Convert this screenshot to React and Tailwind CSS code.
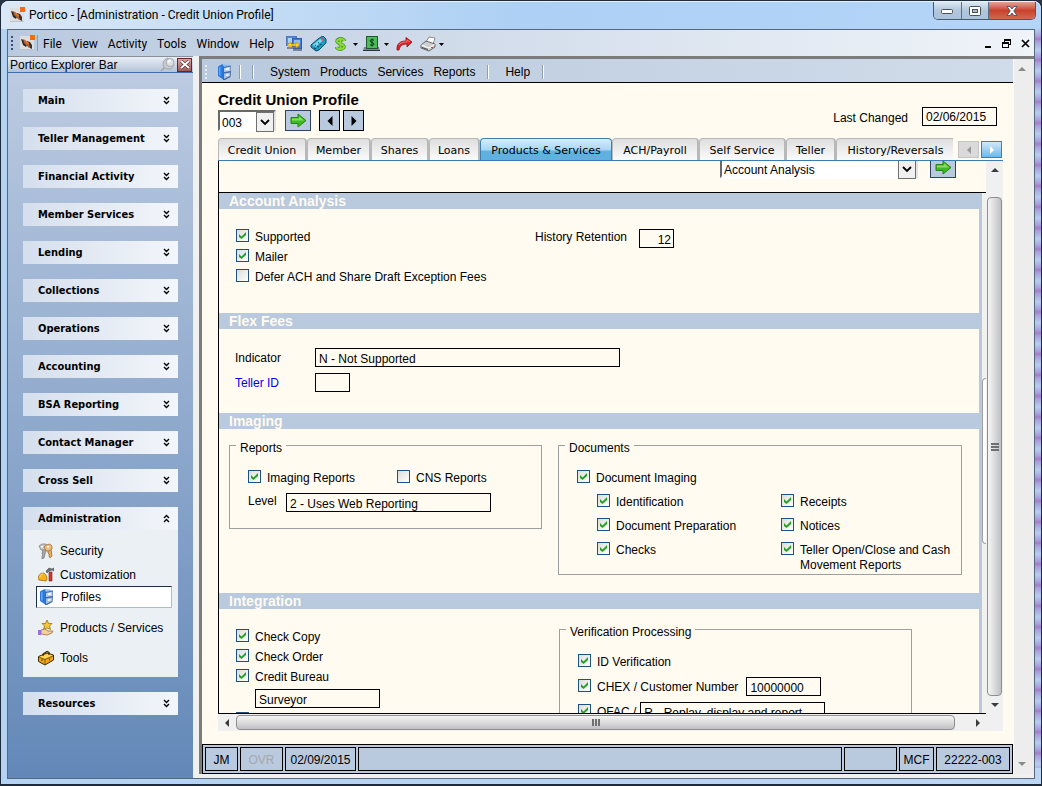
import React from "react";

const UI = "font-['Liberation_Sans',Arial,sans-serif]";

/* ---------- icons ---------- */

function Logo() {
  return (
    <svg width="17" height="16" viewBox="0 0 17 16" className="shrink-0" aria-hidden="true">
      <rect x="1" y="1" width="14" height="14" fill="#dcdee2" />
      <path d="M1 14h14v1H1z" fill="#c0c4ca" />
      <path d="M2 4l3 1 1 2 2 3-1 2-3-2z" fill="#2b2726" />
      <path d="M8 6l3 1 2 3 0 4-2-1-3-3z" fill="#3a3230" />
      <path d="M4 4l4 3 3 5-1 1-5-5z" fill="#a8603a" />
      <path d="M5 4l5 4v2L7 8z" fill="#f0701c" />
      <rect x="11" y="0" width="5" height="5" fill="#fa6a0a" />
    </svg>
  );
}

function Cabinet() {
  return (
    <svg width="16" height="16" viewBox="0 0 16 16" className="shrink-0" aria-hidden="true">
      <path d="M1 2.500L5.500 0 7 2v14l-6-4z" fill="#2a78dc" />
      <path d="M2 3.500l1.500-1v9.500L2 11z" fill="#62aaf6" />
      <path d="M5.500 0L11 0.500 14 2 7 3z" fill="#8fc0f2" />
      <path d="M6 3l8-1.500V7L13.500 13 8 16H6z" fill="#44679f" />
      <path d="M7 4l6.500-1.500v4.500L7 8z" fill="#b7d0f0" />
      <path d="M7 9.500l6-1V12l-6 3z" fill="#a3c1e8" />
      <path d="M9 4.500l3-.5v1.500L9 6zM9 10.500l2.500-.5v1.500l-2.500.5z" fill="#fff" />
    </svg>
  );
}

function Computers() {
  return (
    <svg width="17" height="16" viewBox="0 0 17 16" aria-hidden="true">
      <rect x="0.5" y="0.5" width="10" height="9" fill="#4e8df0" stroke="#5577b8" />
      <rect x="2" y="2" width="7" height="5" fill="#a9d0ff" />
      <rect x="6.5" y="2.500" width="9" height="10" fill="#3f78df" stroke="#3a5da6" />
      <rect x="8" y="4" width="6" height="4" fill="#8cbcfb" />
      <path d="M7 13h9v2H7zM1 11h6v2H1z" fill="#7a86a0" />
      <path d="M1 9l4-3v2h5V6l4 3-4 3v-2H5v2z" fill="#ffd21c" stroke="#b98c14" strokeWidth="0.600" />
    </svg>
  );
}

function Phone() {
  return (
    <svg width="17" height="16" viewBox="0 0 17 16" aria-hidden="true">
      <path d="M1 9L8 3l3-2 2-1 3 3v4l-7 7-3 1-5-4z" fill="#1f9cc4" stroke="#0b4d68" />
      <path d="M2.500 9L10 3l3 1-7 7z" fill="#7edcf0" />
      <path d="M4 12l2 1M7 10l2 1M9.500 8l2 1M5 9l1 .5M8 6.500l1 .5" stroke="#0b4d68" strokeWidth="1.300" />
      <path d="M11 3l2-1 1 2-2 1z" fill="#f04a4a" />
    </svg>
  );
}

function Dollar() {
  return (
    <svg width="13" height="16" viewBox="0 0 13 16" aria-hidden="true">
      <path d="M10.500 5C10 2.500 3 2 3 5.300 3 8 10 7.500 10 10.500 10 14 3 13.500 2.500 11M6.500 1v14" fill="none" stroke="#3f8d1a" strokeWidth="3.400" />
      <path d="M10.500 5C10 2.500 3 2 3 5.300 3 8 10 7.500 10 10.500 10 14 3 13.500 2.500 11M6.500 1.500v13" fill="none" stroke="#8ada3a" strokeWidth="2" />
    </svg>
  );
}

function CashDrawer() {
  return (
    <svg width="18" height="16" viewBox="0 0 18 16" aria-hidden="true">
      <rect x="3.500" y="0.500" width="11" height="12" fill="#4dbb5b" stroke="#1d5a2a" />
      <path d="M1 11h2v2h12v-2h1l1 4H0z" fill="#7c8594" />
      <path d="M0 14h17v1H0z" fill="#2c333e" />
      <path d="M11 4.500C10.500 3.300 7 3.300 7 4.900S11 6.500 11 8.200 7.500 9.500 7 8.500M9 2.500v8" fill="none" stroke="#0d3b16" />
    </svg>
  );
}

function RedArrow() {
  return (
    <svg width="17" height="16" viewBox="0 0 17 16" aria-hidden="true">
      <path d="M1 14c-.5-6 3-9 9-9V1.500L16 6l-5 5V8C6 8 4 10 3 14z" fill="#e1202a" stroke="#8d0f14" strokeWidth="0.800" />
      <path d="M3 9c1-2 4-3 8-3V4l3 2" fill="none" stroke="#f77c7c" strokeWidth="0.900" />
    </svg>
  );
}

function Printer() {
  return (
    <svg width="17" height="16" viewBox="0 0 17 16" aria-hidden="true">
      <path d="M6 6l3-5 6 1-2 6z" fill="#fff" stroke="#777" strokeWidth="0.800" />
      <path d="M1 9l5-4 9 3v3l-6 4-8-3z" fill="#cfcfcf" stroke="#5a5a5a" strokeWidth="0.900" />
      <path d="M1.500 9l7.500 3 5.500-3.500" fill="none" stroke="#fff" />
      <path d="M2 11l6 2v1l-6-2z" fill="#4c4c4c" />
      <path d="M11 11h2v1h-2z" fill="#d23c3c" />
    </svg>
  );
}

function Caret() {
  return (
    <svg width="5" height="3" viewBox="0 0 5 3" className="shrink-0" aria-hidden="true">
      <path d="M0 0h5L2.500 3z" fill="#000" />
    </svg>
  );
}

function Keys() {
  return (
    <svg width="16" height="16" viewBox="0 0 16 16" className="shrink-0" aria-hidden="true">
      <path d="M5 6l3 1-2 8-2 1v-3l1-1-1-1z" fill="#a9a9a9" stroke="#777" strokeWidth="0.700" />
      <path d="M1 3l3-2h4l1 3-2 3H3z" fill="#c4c4c4" stroke="#858585" strokeWidth="0.800" />
      <path d="M10 6h3l1 7-2 2-1-2 0-2-1-1z" fill="#e3ab55" stroke="#96662a" strokeWidth="0.700" />
      <path d="M6 4l2-2 4-1 2 2v3l-3 2H8z" fill="#edbd6f" stroke="#a5733a" strokeWidth="0.800" />
      <path d="M9 3h2v1.500H9zM3 3h2v1.500H3z" fill="#fff" />
    </svg>
  );
}

function HatHammer() {
  return (
    <svg width="16" height="16" viewBox="0 0 16 16" className="shrink-0" aria-hidden="true">
      <path d="M0 11.500C0 8 3 6 5 6s4 3 4 6l-1 2-7-1z" fill="#f7b21b" stroke="#a26708" strokeWidth="0.800" />
      <path d="M2 10c0-2 1-3 3-3" fill="none" stroke="#ffe693" />
      <path d="M8 4l3-3 3 1 2-1v3l-2-1-3 1-2 2z" fill="#6a6f78" stroke="#4c5058" strokeWidth="0.600" />
      <path d="M11 5h3v9h-3z" fill="#d23b2b" stroke="#7c1b12" strokeWidth="0.600" />
    </svg>
  );
}

function HandStar() {
  return (
    <svg width="16" height="16" viewBox="0 0 16 16" className="shrink-0" aria-hidden="true">
      <path d="M9 0l1.500 3.500 3.500 0L11.500 6l1 3.500L9 7.800 5.500 9.500l1-3.500L4 3.500l3.500 0z" fill="#f4c63a" stroke="#9a7413" strokeWidth="0.800" />
      <path d="M3 10l4-1 3 2h5l-1 2-5 2-6-1z" fill="#f6cfa0" stroke="#a8703a" strokeWidth="0.800" />
      <path d="M0 10h3v5H0z" fill="#9a6fe0" />
    </svg>
  );
}

function Toolbox() {
  return (
    <svg width="16" height="16" viewBox="0 0 16 16" className="shrink-0" aria-hidden="true">
      <path d="M.5 6.500L9 3l6.500 2v5L7 15l-6.500-3.500z" fill="#f0a512" stroke="#3f2903" />
      <path d="M1.500 6.500L9.500 4l5 1.300L7 9z" fill="#ffd457" />
      <path d="M1 7l6 2.500L15 6M7 9.500V15" fill="none" stroke="#6b4605" strokeWidth="0.800" />
      <path d="M5 6V4l4-2.500 2 1V5" fill="none" stroke="#3f2a04" strokeWidth="1.300" />
      <path d="M3.500 9h1v2h-1zM11 8.500h1v2h-1z" fill="#5e3d04" />
    </svg>
  );
}

function Pin() {
  return (
    <svg width="16" height="15" viewBox="0 0 16 15" aria-hidden="true">
      <path d="M1 14l5-5" stroke="#a4a4a4" strokeWidth="1.500" />
      <path d="M3 7c0-3 2-5 5-6l6 6c-1 4-3 5-6 5-3 0-5-2-5-5z" fill="#c8cbd0" stroke="#a4a7ab" />
      <circle cx="10" cy="5.500" r="4" fill="#dcdfe3" stroke="#a6a9ad" />
      <path d="M8 5l2.500-2" stroke="#fff" strokeWidth="2" />
    </svg>
  );
}

function GreenArrow() {
  return (
    <svg width="17" height="15" viewBox="0 0 17 15" aria-hidden="true">
      <path d="M1 4.500h7V1l8 6.500-8 6.500v-3.500H1z" fill="#3fba27" stroke="#23840f" />
      <path d="M2 7.500v-2h7V3.200l5 4.300z" fill="#86dc62" />
    </svg>
  );
}

function Chevrons({ up }) {
  return (
    <svg width="7" height="9" viewBox="0 0 7 9" className="mr-2 shrink-0" aria-hidden="true">
      {up ? (
        <path d="M1 4l2.500-2.500L6 4M1 8l2.500-2.500L6 8" fill="none" stroke="#000" strokeWidth="1.400" />
      ) : (
        <path d="M1 1l2.500 2.500L6 1M1 5l2.500 2.500L6 5" fill="none" stroke="#000" strokeWidth="1.400" />
      )}
    </svg>
  );
}

function Triangle({ dir, color = "#3c3c3c", size = 8 }) {
  const paths = {
    up: "M0 6h8L4 2z",
    down: "M0 2h8L4 6z",
    left: "M6 0v8L2 4z",
    right: "M2 0v8l4-4z",
  };
  return (
    <svg width={size} height={size} viewBox="0 0 8 8" aria-hidden="true">
      <path d={paths[dir]} fill={color} />
    </svg>
  );
}

/* ---------- form parts ---------- */

function Check({ label, checked = false, className = "" }) {
  return (
    <label className={`flex items-start gap-1.5 leading-[15px] ${className}`}>
      <span className="grid h-[13px] w-[13px] shrink-0">
        <input
          type="checkbox"
          defaultChecked={checked}
          className="peer col-start-1 row-start-1 h-[13px] w-[13px] appearance-none border border-[#1c5180] bg-linear-to-br from-[#dcdcd7] to-white"
        />
        <svg
          width="13"
          height="13"
          viewBox="0 0 13 13"
          className="pointer-events-none invisible col-start-1 row-start-1 peer-checked:visible"
          aria-hidden="true"
        >
          <path d="M3 5l2.500 2.500L10 3v3L5.500 10 3 8z" fill="#21a121" />
        </svg>
      </span>
      <span className="pt-px">{label}</span>
    </label>
  );
}

function Field({ label, value, className = "" }) {
  return (
    <input
      type="text"
      aria-label={label}
      defaultValue={value}
      className={`h-[19px] border border-black bg-[#fffbf0] px-[3px] pt-[2px] ${className}`}
    />
  );
}

function Picker({ label, value, className = "" }) {
  return (
    <div className={`grid border-2 border-t-[#696969] border-l-[#696969] border-r-[#e3e3e3] border-b-[#e3e3e3] bg-white ${className}`}>
      <select aria-label={label} className="col-start-1 row-start-1 appearance-none bg-white pt-0.5 pl-0.5 outline-none">
        <option>{value}</option>
      </select>
      <span className="pointer-events-none col-start-1 row-start-1 grid w-[18px] place-items-center justify-self-end border border-[#707070] bg-[#f0f0f0]">
        <svg width="10" height="7" viewBox="0 0 10 7" aria-hidden="true">
          <path d="M1 1l4 4 4-4" fill="none" stroke="#000" strokeWidth="1.800" />
        </svg>
      </span>
    </div>
  );
}

function GoButton() {
  return (
    <button type="button" aria-label="Go" className="grid h-[21px] w-[26px] shrink-0 place-items-center border border-[#2b4468] bg-[#b9c9de]">
      <GreenArrow />
    </button>
  );
}

function Section({ title, children }) {
  return (
    <section>
      <h2 className="h-4 bg-[#b9c9de] pl-2.5 text-[14px] leading-4 font-bold text-[#fffbf0]">{title}</h2>
      {children}
    </section>
  );
}

function Group({ title, className = "", children }) {
  return (
    <fieldset className={`shrink-0 border border-[#9d9fa1] ${className}`}>
      <legend className="ml-1.5 px-1 pt-1.5 leading-[14px]">{title}</legend>
      {children}
    </fieldset>
  );
}

/* ---------- sidebar ---------- */

const NAV_TOP = [
  "Main",
  "Teller Management",
  "Financial Activity",
  "Member Services",
  "Lending",
  "Collections",
  "Operations",
  "Accounting",
  "BSA Reporting",
  "Contact Manager",
  "Cross Sell",
];

function NavHeader({ title, open = false }) {
  return (
    <button
      type="button"
      aria-expanded={open}
      className="flex h-[23px] w-full items-center justify-between bg-linear-to-r from-[#d5dfed] to-[#f3f6fb] pl-[15px] font-['DejaVu_Sans_Condensed','DejaVu_Sans',sans-serif] text-[11px] font-bold"
    >
      <span className="pt-0.5">{title}</span>
      <Chevrons up={open} />
    </button>
  );
}

function NavLink({ icon, title, className = "h-6" }) {
  return (
    <a href="#" className={`flex items-center gap-1.5 pl-[15px] ${className}`}>
      {icon}
      <span>{title}</span>
    </a>
  );
}

function Sidebar() {
  return (
    <aside className="flex w-[185px] shrink-0 flex-col border-t border-[#8a9098]">
      <div className="flex h-[16px] items-center border-b border-[#3d6ea5] bg-linear-to-b from-[#e9eef5] to-[#b4c3d8] pl-0.5">
        <span className="flex-1">Portico Explorer Bar</span>
        <button type="button" aria-label="Pin" className="mr-px">
          <Pin />
        </button>
        <button type="button" aria-label="Close bar" className="mr-px grid h-[14px] w-[15px] place-items-center border border-[#6b2424] bg-linear-to-b from-[#d7a5a3] to-[#a05a58]">
          <svg width="10" height="9" viewBox="0 0 10 9" aria-hidden="true">
            <path d="M1 1l8 7M9 1L1 8" stroke="#4a2a2a" strokeWidth="3.200" />
            <path d="M1 1l8 7M9 1L1 8" stroke="#fff" strokeWidth="2" />
          </svg>
        </button>
      </div>
      <nav className="flex flex-1 flex-col gap-[15px] bg-linear-to-b from-[#bccbe1] to-[#6388b8] px-[15px] pt-4">
        {NAV_TOP.map((t) => (
          <NavHeader key={t} title={t} />
        ))}
        <div>
          <NavHeader title="Administration" open />
          <div className="bg-[#ebf0f5] pt-[9px] pb-[7px]">
            <NavLink icon={<Keys />} title="Security" />
            <NavLink icon={<HatHammer />} title="Customization" className="h-[23px]" />
            <a
              href="#"
              aria-current="page"
              className="mr-1.5 ml-[13px] flex h-[22px] items-center gap-1.5 border border-t-[#1b2f49] border-r-[#a9bdd6] border-b-[#a9bdd6] border-l-[#1b2f49] bg-white pl-[2px]"
            >
              <Cabinet />
              <span>Profiles</span>
            </a>
            <NavLink icon={<HandStar />} title="Products / Services" className="mt-2 h-6" />
            <NavLink icon={<Toolbox />} title="Tools" className="mt-1.5 h-6" />
          </div>
        </div>
        <NavHeader title="Resources" />
      </nav>
    </aside>
  );
}

/* ---------- tabs ---------- */

const TABS = [
  ["Credit Union", "w-[89px]"],
  ["Member", "w-[64px]"],
  ["Shares", "w-[58px]"],
  ["Loans", "w-[51px]"],
  ["Products & Services", "w-[132px]"],
  ["ACH/Payroll", "w-[87px]"],
  ["Self Service", "w-[87px]"],
  ["Teller", "w-[50px]"],
  ["History/Reversals", "w-[120px]"],
];

function Tabs() {
  return (
    <div className="flex items-end border-b border-[#3b7ab5]">
      <div role="tablist" className="flex w-[735px] shrink overflow-hidden font-['DejaVu_Sans',Verdana,sans-serif] text-[11px]">
        {TABS.map(([name, width]) => {
          const active = name === "Products & Services";
          return (
            <button
              key={name}
              type="button"
              role="tab"
              aria-selected={active}
              className={`h-[22px] shrink-0 rounded-t-[4px] border border-b-0 pt-1 whitespace-nowrap ${width} ${
                active
                  ? "border-[#3c7fb1] bg-linear-to-b from-[#d8eefb] from-0% via-[#a5d8f5] via-50% to-[#60b0e0] to-60%"
                  : "border-r-2 border-[#b8b8b8] bg-linear-to-b from-[#dedede] to-[#fbfbfb]"
              }`}
            >
              {name}
            </button>
          );
        })}
      </div>
      <div className="ml-auto flex gap-0.5 pr-px pb-0.5">
        <button type="button" aria-label="Scroll tabs left" className="grid h-[17px] w-[21px] place-items-center border border-[#c4c4c4] bg-[#dadada]">
          <Triangle dir="left" color="#999" />
        </button>
        <button type="button" aria-label="Scroll tabs right" className="grid h-[17px] w-[21px] place-items-center border border-[#3c7fb1] bg-linear-to-b from-[#cfeafa] to-[#6bb8e8]">
          <Triangle dir="right" color="#fff" />
        </button>
      </div>
    </div>
  );
}

/* ---------- form body ---------- */

function FormBody() {
  return (
    <div className="flex min-h-0 flex-1 flex-col overflow-hidden border-b border-l border-black">
      <div className="flex h-[31px] shrink-0 items-end justify-end gap-3 overflow-hidden pr-[30px] pb-3.5">
        <Picker label="Section" value="Account Analysis" className="h-[21px] w-[198px] shrink-0" />
        <GoButton />
      </div>
      <div className="flex min-h-0 flex-1 border-t border-black">
        <div className="min-w-0 flex-1 overflow-hidden border-r-[3px] border-[#b9c9de]">
          <Section title="Account Analysis">
            <div className="flex pt-5 pb-[28px] pl-[17px]">
              <div className="flex w-[299px] flex-col gap-1">
                <Check label="Supported" checked />
                <Check label="Mailer" checked />
                <Check label="Defer ACH and Share Draft Exception Fees" />
              </div>
              <div className="flex items-start">
                <span className="w-[104px] leading-[17px]">History Retention</span>
                <Field label="History Retention" value="12" className="w-[35px] pr-0.5 text-right" />
              </div>
            </div>
          </Section>

          <Section title="Flex Fees">
            <div className="grid grid-cols-[80px_1fr] items-center gap-y-1.5 pt-[19px] pb-[21px] pl-4">
              <span>Indicator</span>
              <Field label="Indicator" value="N - Not Supported" className="w-[305px]" />
              <a href="#" className="text-[#0000ee]">
                Teller ID
              </a>
              <Field label="Teller ID" value="" className="w-[35px]" />
            </div>
          </Section>

          <Section title="Imaging">
            <div className="flex items-start gap-4 pt-1.5 pb-[18px] pl-2.5">
              <Group title="Reports" className="w-[313px]">
                <div className="flex flex-col gap-[7px] pt-[15px] pb-4 pl-[18px]">
                  <div className="flex">
                    <Check label="Imaging Reports" checked className="w-[149px]" />
                    <Check label="CNS Reports" />
                  </div>
                  <div className="flex">
                    <span className="w-[38px] leading-[17px]">Level</span>
                    <Field label="Level" value="2 - Uses Web Reporting" className="w-[205px]" />
                  </div>
                </div>
              </Group>
              <Group title="Documents" className="w-[404px]">
                <div className="pt-[15px] pb-px pl-[18px]">
                  <Check label="Document Imaging" checked />
                  <div className="grid grid-cols-[184px_180px] gap-y-2 pt-2 pl-5">
                    <Check label="Identification" checked />
                    <Check label="Receipts" checked />
                    <Check label="Document Preparation" checked />
                    <Check label="Notices" checked />
                    <Check label="Checks" checked />
                    <Check label="Teller Open/Close and Cash Movement Reports" checked />
                  </div>
                </div>
              </Group>
            </div>
          </Section>

          <Section title="Integration">
            <div className="flex items-start pl-[17px]">
              <div className="flex w-[323px] flex-col gap-1 pt-5">
                <Check label="Check Copy" checked />
                <Check label="Check Order" checked />
                <Check label="Credit Bureau" checked />
                <Field label="Credit bureau name" value="Surveyor" className="ml-[19px] w-[125px]" />
                <Check label="" />
              </div>
              <Group title="Verification Processing" className="mt-2.5 w-[353px]">
                <div className="flex flex-col pt-2.5 pb-4 pl-[18px]">
                  <div className="flex h-[25px] items-center">
                    <Check label="ID Verification" checked />
                  </div>
                  <div className="flex h-[25px] items-center gap-2">
                    <Check label="CHEX / Customer Number" checked />
                    <Field label="Customer number" value="10000000" className="w-[75px]" />
                  </div>
                  <div className="flex h-[25px] items-center gap-1">
                    <Check label="OFAC /" checked />
                    <Field label="OFAC option" value="R - Replay, display and report" className="w-[185px]" />
                  </div>
                </div>
              </Group>
            </div>
          </Section>
        </div>
        <div className="flex w-[4px] shrink-0 flex-col justify-center bg-[#f1f1ee] pt-4">
          <div className="h-[166px] rounded-l-sm border border-r-0 border-[#a0a0a0] bg-white" />
        </div>
      </div>
    </div>
  );
}

function ScrollV() {
  return (
    <div className="flex w-[17px] shrink-0 flex-col items-center bg-[#f0f0f0]">
      <button type="button" aria-label="Scroll up" className="grid h-[18px] w-full place-items-center">
        <Triangle dir="up" />
      </button>
      <div className="mt-[18px] flex w-[15px] flex-1 flex-col items-center justify-center gap-px rounded-sm border border-[#8f8f8f] bg-linear-to-r from-[#f5f5f5] via-[#dcdcdc] to-[#c0c0c4]">
        <i className="h-0.5 w-2 bg-[#707070]" />
        <i className="h-0.5 w-2 bg-[#707070]" />
        <i className="h-0.5 w-2 bg-[#707070]" />
      </div>
      <button type="button" aria-label="Scroll down" className="grid h-[18px] w-full place-items-center">
        <Triangle dir="down" />
      </button>
    </div>
  );
}

function ScrollH() {
  return (
    <div className="flex h-[17px] shrink-0 items-center bg-[#f0f0f0] pr-[17px]">
      <button type="button" aria-label="Scroll left" className="grid h-full w-[18px] place-items-center">
        <Triangle dir="left" />
      </button>
      <div className="mr-3.5 flex h-[15px] flex-1 items-center justify-center gap-px rounded-sm border border-[#8f8f8f] bg-linear-to-b from-[#f5f5f5] via-[#dcdcdc] to-[#c0c0c4]">
        <i className="h-[7px] w-0.5 bg-[#707070]" />
        <i className="h-[7px] w-0.5 bg-[#707070]" />
        <i className="h-[7px] w-0.5 bg-[#707070]" />
      </div>
      <button type="button" aria-label="Scroll right" className="grid h-full w-[17px] place-items-center">
        <Triangle dir="right" />
      </button>
    </div>
  );
}

function Sep({ className = "" }) {
  return <span className={`h-[14px] w-0.5 border-l border-[#8e9db3] bg-white ${className}`} />;
}

function Grip({ className }) {
  return (
    <span className={`flex flex-col gap-0.5 ${className}`}>
      <i className="h-0.5 w-0.5 bg-current" />
      <i className="h-0.5 w-0.5 bg-current" />
      <i className="h-0.5 w-0.5 bg-current" />
      <i className="h-0.5 w-0.5 bg-current" />
    </span>
  );
}

/* ---------- page ---------- */

export default function App() {
  return (
    <div className="h-screen min-h-[600px] bg-[#2a3644]">
      <div
        className={`flex h-full flex-col rounded-t-lg border border-b-2 border-[#1d2b3a] bg-linear-to-r from-[#b4d3f2] to-[#bcd6f3] text-[12px] text-black ${UI}`}
      >
        {/* title bar */}
        <header className="flex h-[28px] shrink-0 items-start rounded-t-lg border-t border-[#e8f3fd] bg-linear-to-r from-[#dbe8f6] via-[#add0f4] to-[#b4d5f8] pr-[5px] pl-2">
          <div className="flex h-[26px] items-center gap-[3px] font-['Roboto','Segoe_UI',sans-serif]">
            <Logo />
            <h1>Portico - [Administration - Credit Union Profile]</h1>
          </div>
          <div className="ml-auto flex h-[18px] overflow-hidden rounded-b-[5px] border border-t-0 border-[#46596e]">
            <button type="button" aria-label="Minimize" className="grid w-[28px] place-items-center border-r border-[#5b6f85] bg-linear-to-b from-[#dce8f4] via-[#b3c6db] to-[#a9c2dc]">
              <svg width="13" height="6" viewBox="0 0 13 6" aria-hidden="true">
                <rect x="0.500" y="1.500" width="11" height="4" rx="1" fill="#fff" stroke="#48525f" />
              </svg>
            </button>
            <button type="button" aria-label="Restore" className="grid w-[27px] place-items-center border-r border-[#5b6f85] bg-linear-to-b from-[#dce8f4] via-[#b3c6db] to-[#a9c2dc]">
              <svg width="12" height="10" viewBox="0 0 12 10" aria-hidden="true">
                <rect x="0.500" y="0.500" width="11" height="9" rx="1" fill="#fff" stroke="#48525f" />
                <rect x="3.500" y="3.500" width="5" height="3" fill="#a9bdd3" stroke="#48525f" />
              </svg>
            </button>
            <button type="button" aria-label="Close" className="grid w-[46px] place-items-center bg-linear-to-b from-[#e2a294] from-0% via-[#c9402d] via-50% to-[#cf6a50] to-100%">
              <svg width="12" height="10" viewBox="0 0 12 10" aria-hidden="true">
                <path d="M1 .5h3l2 2.500 2-2.500h3L7.700 5 11 9.500H8L6 7 4 9.500H1L4.300 5z" fill="#fff" stroke="#48525f" strokeWidth="0.900" />
              </svg>
            </button>
          </div>
        </header>

        <div className="flex min-h-0 flex-1 pl-1.5">
          <div className="mb-[5px] flex min-w-0 flex-1 flex-col border border-[#54697f] bg-[#f0f0f0]">
            {/* menu bar */}
            <div className="flex h-[26px] shrink-0 items-center bg-linear-to-r from-[#b9c9df] to-[#f0f4f9]">
              <Grip className="ml-[3px] text-[#31507e]" />
              <span className="ml-1.5 border-r border-[#6ea0dc] pr-px">
                <Logo />
              </span>
              <nav className="ml-[5px] flex gap-[10px] pt-0.5 font-['Roboto','Segoe_UI',sans-serif] text-[12px]">
                {["File", "View", "Activity", "Tools", "Window", "Help"].map((m) => (
                  <button key={m} type="button">
                    {m}
                  </button>
                ))}
              </nav>
              <div className="ml-3 flex items-center gap-[7px] pt-0.5">
                <button type="button" aria-label="Network"><Computers /></button>
                <button type="button" aria-label="Phone"><Phone /></button>
                <button type="button" aria-label="Cash" className="flex items-center gap-[6px]"><Dollar /><Caret /></button>
                <button type="button" aria-label="Drawer" className="-ml-0.5 flex items-center gap-[3px]"><CashDrawer /><Caret /></button>
                <button type="button" aria-label="Forward"><RedArrow /></button>
                <button type="button" aria-label="Print" className="flex items-center gap-[2px]"><Printer /><Caret /></button>
              </div>
              <div className="mr-1 ml-auto flex items-center gap-2.5">
                <button type="button" aria-label="Minimize document">
                  <svg width="7" height="9" viewBox="0 0 7 9" aria-hidden="true"><path d="M0 7h6v2H0z" /></svg>
                </button>
                <button type="button" aria-label="Restore document">
                  <svg width="9" height="9" viewBox="0 0 9 9" shapeRendering="crispEdges" aria-hidden="true">
                    <path d="M2 0h7v6H7V5h1V2H3v1H2zM0 3h7v6H0zM1 5v3h5V5z" fillRule="evenodd" />
                  </svg>
                </button>
                <button type="button" aria-label="Close document">
                  <svg width="9" height="9" viewBox="0 0 9 9" aria-hidden="true"><path d="M1 1l7 7M8 1L1 8" stroke="#000" strokeWidth="1.700" /></svg>
                </button>
              </div>
            </div>

            <div className="flex min-h-0 flex-1">
              <Sidebar />
              <div className="mb-1 ml-1.5 flex min-w-0 flex-1 border-t-[3px] border-l-[3px] border-[#7c7c7c]">
                <main className="flex min-w-0 flex-1 flex-col bg-[#fffbf0]">
                  {/* page toolbar */}
                  <div className="flex h-6 shrink-0 items-center border-b border-black bg-linear-to-r from-[#b9c9de] to-[#d0dce9] pt-0.5">
                    <Grip className="ml-[3px] text-[#e9eef5]" />
                    <span className="ml-2.5"><Cabinet /></span>
                    <Sep className="ml-1.5" />
                    <Sep className="ml-[11px]" />
                    <nav className="ml-4 flex gap-[10px]">
                      {["System", "Products", "Services", "Reports"].map((m) => (
                        <button key={m} type="button">{m}</button>
                      ))}
                    </nav>
                    <Sep className="ml-3" />
                    <button type="button" className="ml-4">Help</button>
                    <Sep className="ml-3" />
                  </div>

                  <div className="flex min-h-0 flex-1 flex-col pr-2.5 pl-4">
                    {/* heading row */}
                    <div className="flex shrink-0 items-end justify-between pt-2">
                      <div>
                        <h2 className="text-[15px] leading-[18px] font-bold">Credit Union Profile</h2>
                        <div className="mt-px flex items-center">
                          <Picker label="Credit union number" value="003" className="h-[21px] w-[58px]" />
                          <div className="ml-[9px] flex">
                            <GoButton />
                            <button type="button" aria-label="Previous" className="ml-2 grid h-[21px] w-[21px] place-items-center border border-black bg-[#b9c9de]">
                              <Triangle dir="left" color="#000" size={10} />
                            </button>
                            <button type="button" aria-label="Next" className="ml-[3px] grid h-[21px] w-[21px] place-items-center border border-black bg-[#b9c9de]">
                              <Triangle dir="right" color="#000" size={10} />
                            </button>
                          </div>
                        </div>
                      </div>
                      <div className="flex items-center gap-3.5 pr-1.5 pb-1">
                        <span className="pt-1">Last Changed</span>
                        <Field label="Last Changed" value="02/06/2015" className="w-[75px]" />
                      </div>
                    </div>

                    <div className="mt-[7px] shrink-0">
                      <Tabs />
                    </div>
                    <div className="flex min-h-0 flex-1">
                      <FormBody />
                      <ScrollV />
                    </div>
                    <ScrollH />
                  </div>

                  {/* status bar */}
                  <footer className="mt-[13px] flex h-[30px] shrink-0 gap-0.5 border border-black bg-[#b9c9de] p-0.5 leading-6">
                    <span className="w-[33px] border border-black text-center">JM</span>
                    <span className="w-[43px] border border-black text-center text-[#a3a8ae]">OVR</span>
                    <span className="w-[71px] border border-black text-center whitespace-nowrap">02/09/2015</span>
                    <span className="flex-1 border border-black" />
                    <span className="w-[53px] border border-black" />
                    <span className="w-[35px] border border-black text-center">MCF</span>
                    <span className="w-[74px] border border-black text-center">22222-003</span>
                  </footer>
                </main>
                {/* window scrollbar */}
                <div className="flex w-[21px] shrink-0 flex-col items-center justify-between border-l border-[#fafafa] bg-[#ededed] py-1.5 pr-1">
                  <Triangle dir="up" color="#8a8a8a" />
                  <Triangle dir="down" color="#8a8a8a" />
                </div>
              </div>
            </div>
          </div>
          <div className="mb-4 w-[6px] shrink-0 bg-[repeating-linear-gradient(180deg,#b7cdf0_0px,#a9a0dc_7px,#a77cc9_10px,#a9a0dc_13px,#b7cdf0_21px)]" />
        </div>
      </div>
    </div>
  );
}
